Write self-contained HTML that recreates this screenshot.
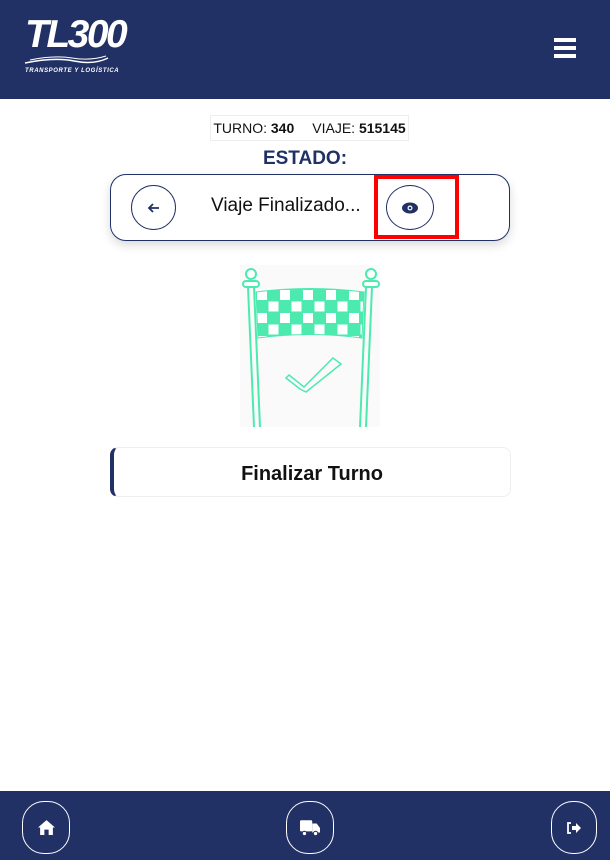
<!DOCTYPE html>
<html><head><meta charset="utf-8"><style>
*{box-sizing:border-box;margin:0;padding:0}
body{width:610px;height:860px;background:#fff;font-family:"Liberation Sans",sans-serif;position:relative;overflow:hidden}
.hdr{position:absolute;left:0;top:0;width:610px;height:99px;background:#223165}
.ftr{position:absolute;left:0;top:791px;width:610px;height:69px;background:#223165}
.fb{position:absolute;top:10px;width:48px;height:53px;border:1.5px solid #fff;border-radius:22px;display:flex;align-items:center;justify-content:center}
.info{position:absolute;left:210px;top:115px;width:199px;height:26px;border:1px solid #eee;font-size:14px;color:#111;display:flex;align-items:center;justify-content:center;gap:18px}
.estado{position:absolute;left:0;width:610px;top:148px;text-align:center;font-weight:bold;font-size:19px;color:#223165}
.box{position:absolute;left:110px;top:174px;width:400px;height:67px;border:1px solid #223165;border-radius:16px;box-shadow:0 4px 10px rgba(0,0,0,.15)}
.cb{position:absolute;width:45px;height:45px;border:1px solid #223165;border-radius:50%;display:flex;align-items:center;justify-content:center}
.fin{position:absolute;left:110px;top:447px;width:401px;height:50px;border:1px solid #eee;border-left:4px solid #223165;border-radius:8px;font-weight:bold;font-size:20px;padding-top:4px;display:flex;align-items:center;justify-content:center;color:#111}
</style></head><body>
<div class="hdr">
<div style="position:absolute;left:25px;top:13px;color:#fff;font-style:italic;font-weight:bold;font-size:39px;letter-spacing:-2.5px">TL300</div>
<svg style="position:absolute;left:24px;top:55px" width="86" height="10"><path d="M1 8 Q30 2 50 6 T84 3" stroke="#fff" stroke-width="1.5" fill="none"/><path d="M6 5 Q30 0 48 3 T82 1" stroke="#fff" stroke-width="1" fill="none"/></svg>
<div style="position:absolute;left:25px;top:68px;color:#fff;font-size:6px;font-weight:bold;font-style:italic;letter-spacing:.6px">TRANSPORTE Y LOGÍSTICA</div>
<div style="position:absolute;left:554px;top:38px;width:22px;height:3.5px;background:#fff;box-shadow:0 8px 0 #fff,0 16px 0 #fff"></div>
</div>
<div class="info"><span>TURNO: <b>340</b></span><span>VIAJE: <b>515145</b></span></div>
<div class="estado">ESTADO:</div>
<div class="box">
<div class="cb" style="left:20px;top:10px"><svg width="14" height="14" viewBox="0 0 14 14"><path d="M12 7H2M6 3L2 7l4 4" stroke="#223165" stroke-width="1.8" fill="none"/></svg></div>
<div style="position:absolute;left:100px;top:20px;font-size:19px;color:#111">Viaje Finalizado...</div>
<div class="cb" style="left:275px;top:10px;width:48px;height:45px"><svg width="16" height="12" viewBox="0 0 16 12"><ellipse cx="8" cy="6" rx="8" ry="5.5" fill="#223165"/><circle cx="8" cy="6" r="2.5" fill="#fff"/><circle cx="8" cy="6" r="1.3" fill="#223165"/></svg></div>
</div>
<div style="position:absolute;left:374px;top:175px;width:85px;height:64px;border:4px solid #f00"></div>
<svg style="position:absolute;left:240px;top:265px" width="140" height="162" viewBox="0 0 140 162">
<rect width="140" height="162" fill="#fafafa"/>
<defs><pattern id="c" x="16" y="24" width="23" height="23" patternUnits="userSpaceOnUse"><rect width="23" height="23" fill="#4deab0"/><rect x="1" y="1" width="10" height="10" fill="#fff"/><rect x="12.5" y="12.5" width="10" height="10" fill="#fff"/></pattern></defs>
<path d="M16 27 Q70 20 124 27 L122 73 Q70 66 18 73Z" fill="url(#c)" stroke="#4deab0"/>
<g stroke="#4deab0" stroke-width="2" fill="#fff">
<path d="M8 22 L14 162 M14 22 L20 162"/><path d="M126 22 L120 162 M132 22 L126 162"/>
<circle cx="11" cy="9" r="5"/><rect x="3" y="16" width="16" height="6" rx="3"/>
<circle cx="131" cy="9" r="5"/><rect x="123" y="16" width="16" height="6" rx="3"/>
<path d="M49 110 L64 122 L93 93 L101 99 L66 127 L60 124 L46 113Z" fill="none" stroke-width="1.5"/>
</g></svg>
<div class="fin">Finalizar Turno</div>
<div class="ftr">
<div class="fb" style="left:22px"><svg width="17" height="15" viewBox="0 0 16 14"><path d="M8 0L0 7h2v7h4V9h4v5h4V7h2z" fill="#fff"/></svg></div>
<div class="fb" style="left:286px"><svg width="20" height="16" viewBox="0 0 18 14"><rect x="0" y="0" width="11" height="10" rx="1" fill="#fff"/><path d="M11 3h4l3 4v4h-7z" fill="#fff"/><circle cx="4" cy="12" r="2" fill="#fff" stroke="#223165"/><circle cx="14" cy="12" r="2" fill="#fff" stroke="#223165"/></svg></div>
<div class="fb" style="left:551px;width:46px"><svg width="14" height="12" viewBox="0 0 14 12"><path d="M4 1H1v10h3" stroke="#fff" stroke-width="1.8" fill="none"/><path d="M5 4h4V1l5 5-5 5V8H5z" fill="#fff"/></svg></div>
</div>
</body></html>
